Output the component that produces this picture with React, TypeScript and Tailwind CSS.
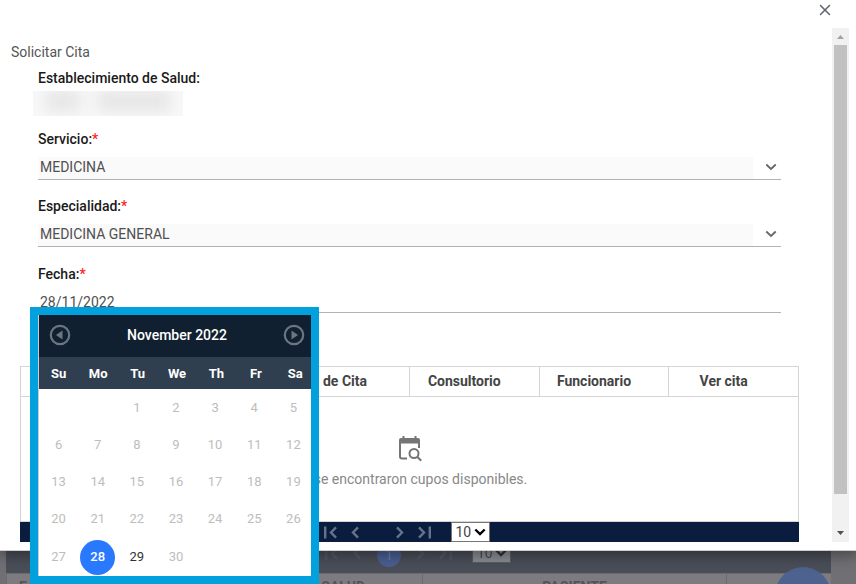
import { X } from "lucide-react";
import type { ReactNode } from "react";

const WEEKDAYS = ["Su", "Mo", "Tu", "We", "Th", "Fr", "Sa"];
const DAYS = Array.from({ length: 30 }, (_, i) => i + 1);
const SELECTED_DAY = 28;
const NEXT_FREE_DAY = 29;

function Chevron({ className, strokeWidth }: { className: string; strokeWidth: number }) {
  return (
    <svg viewBox="0 0 12 12" className={"size-3 " + className} fill="none" stroke="currentColor" strokeWidth={strokeWidth}>
      <path d="M1.300 3.500L6 8l4.700-4.500" />
    </svg>
  );
}

function FieldLabel({ htmlFor, children }: { htmlFor: string; children: ReactNode }) {
  return (
    <label htmlFor={htmlFor} className="block text-sm leading-5 font-medium text-[#1a1a1a]">
      {children}
      <span className="text-[#f22]">*</span>
    </label>
  );
}

function SelectField({ id, label, value }: { id: string; label: string; value: string }) {
  return (
    <div className="flex flex-col gap-2">
      <FieldLabel htmlFor={id}>{label}</FieldLabel>
      <div className="flex border-b border-[#b2b2b2]">
        <select
          id={id}
          className="h-[22px] flex-1 appearance-none bg-[#fafafa] pb-[2px] pl-[2px] text-sm leading-5 text-[#505050] outline-none"
        >
          <option>{value}</option>
        </select>
        <Chevron className="mt-1 mr-1 ml-3 text-[#666]" strokeWidth={1.8} />
      </div>
    </div>
  );
}

function CalendarArrow({ direction }: { direction: "prev" | "next" }) {
  return (
    <button type="button" aria-label={direction} className="text-[#6c7680]">
      <svg viewBox="0 0 22 22" className="size-[22px]" fill="none">
        <circle cx="11" cy="11" r="9.200" stroke="currentColor" strokeWidth="2.200" />
        <path d={direction === "prev" ? "M13.500 6.400v9.200L7 11z" : "M8.500 6.400v9.200L15 11z"} fill="currentColor" />
      </svg>
    </button>
  );
}

function DatePicker() {
  return (
    <div className="absolute top-4 -left-2 z-20 h-[277px] w-[289px] overflow-hidden border-8 border-[#02a1de] bg-white">
      <div className="w-[277px] border-l border-[#ccc]">
        <div className="flex h-[42px] items-center justify-between bg-[#102030] px-[10px] pb-[2px]">
          <CalendarArrow direction="prev" />
          <span className="text-sm font-medium text-white">November 2022</span>
          <CalendarArrow direction="next" />
        </div>
        <div className="grid h-8 grid-cols-7 items-center bg-[#2f3f4f] pt-px text-center text-[13px] font-bold text-white">
          {WEEKDAYS.map((day) => (
            <span key={day}>{day}</span>
          ))}
        </div>
        <div className="grid grid-cols-7 grid-rows-[repeat(4,37px)_40px] place-items-center pr-[2px] text-[13px] text-[#bdbdbd]">
          {DAYS.map((day) => (
            <button
              type="button"
              key={day}
              className={
                (day === 1 ? "col-start-3 " : "") +
                (day === SELECTED_DAY
                  ? "size-[35px] rounded-full bg-[#2979ff] font-medium text-white"
                  : day === NEXT_FREE_DAY
                    ? "text-[#333]"
                    : "")
              }
            >
              {day}
            </button>
          ))}
        </div>
      </div>
    </div>
  );
}

const PAGER_PATHS = {
  first: "M2.200 1.500v12M13 2.300l-5 5.200 5 5.200",
  prev: "M10 2.300l-5 5.200 5 5.200",
  next: "M5 2.300l5 5.200-5 5.200",
  last: "M2 2.300l5 5.200-5 5.200M12.800 1.500v12",
};

function PagerButton({ kind }: { kind: keyof typeof PAGER_PATHS }) {
  return (
    <button type="button" aria-label={kind} className="text-[#66728a]">
      <svg viewBox="0 0 15 15" className="size-[15px]" fill="none" stroke="currentColor" strokeWidth="2.400">
        <path d={PAGER_PATHS[kind]} />
      </svg>
    </button>
  );
}

function PageSize({ label }: { label: string }) {
  return (
    <span className="relative ml-[19px] flex items-center">
      <select
        aria-label={label}
        className="h-5 w-[39px] appearance-none border border-[#767676] bg-white pl-1 text-sm leading-4 text-[#444]"
      >
        <option>10</option>
      </select>
      <Chevron className="pointer-events-none absolute right-1 text-black" strokeWidth={2.4} />
    </span>
  );
}

function CalendarSearchIcon() {
  return (
    <svg viewBox="0 0 24 27" className="h-[27px] w-6" fill="none" stroke="#757575" strokeWidth="2">
      <path d="M9 23.500H4a2 2 0 0 1-2-2V5.500M21 5v8" />
      <path d="M3 3h17a2 2 0 0 1 2 2v3.500H1V5a2 2 0 0 1 2-2zM4.500 1h2v3h-2zM16.500 1h2v3h-2z" fill="#757575" stroke="none" />
      <circle cx="16" cy="18.500" r="4.500" />
      <path d="M19.200 21.700l4 4" />
    </svg>
  );
}

function Scrollbar() {
  return (
    <div className="flex w-[17px] flex-col items-center bg-[#f1f1f1]">
      <svg viewBox="0 0 17 17" className="size-[17px]" fill="#a3a3a3">
        <path d="M5 11h7L8.500 7z" />
      </svg>
      <div className="h-[449px] w-[13px] bg-[#c1c1c1]" />
      <svg viewBox="0 0 17 17" className="mt-auto size-[17px]" fill="#505050">
        <path d="M5 6h7L8.500 10z" />
      </svg>
    </div>
  );
}

function RedactedName() {
  return (
    <div className="mt-[3px] -ml-[5px] flex h-[25px] w-[150px] gap-4 overflow-hidden bg-[#f9f9f9] pr-3 pl-3">
      <span className="h-5 w-9 bg-[#e4e4e4] blur-[8px]" />
      <span className="h-5 flex-1 bg-[#e4e4e4] blur-[8px]" />
    </div>
  );
}

function AppointmentDialog() {
  return (
    <div
      role="dialog"
      aria-labelledby="dialog-title"
      className="relative z-10 border-b border-[#ccc] bg-white pb-2 shadow-[0_2px_14px_2px_rgba(0,0,0,0.4)]"
    >
      <div className="flex h-7 justify-end pr-[22px]">
        <button type="button" aria-label="Cerrar" className="h-5 text-[#5c6670]">
          <X size={18} strokeWidth={2} />
        </button>
      </div>
      <div className="flex pr-[7px]">
        <div className="min-w-0 flex-1 pt-4">
          <h1 id="dialog-title" className="pl-[11px] text-sm leading-4 text-[#555]">
            Solicitar Cita
          </h1>
          <form className="mt-2 pr-[51px] pl-[38px]">
            <p className="text-sm leading-5 font-medium text-[#1a1a1a]">Establecimiento de Salud:</p>
            <RedactedName />
            <div className="mt-[13px] flex flex-col gap-4">
              <SelectField id="servicio" label="Servicio:" value="MEDICINA" />
              <SelectField id="especialidad" label="Especialidad:" value="MEDICINA GENERAL" />
              <div className="pt-px">
                <FieldLabel htmlFor="fecha">Fecha:</FieldLabel>
                <div className="relative mt-[7px]">
                  <input
                    id="fecha"
                    defaultValue="28/11/2022"
                    className="block h-[22px] w-full border-b border-[#b2b2b2] pl-[2px] text-sm text-[#505050] outline-none"
                  />
                  <DatePicker />
                </div>
              </div>
            </div>
          </form>
          <div className="mt-[53px] mr-[33px] ml-5">
            <table className="w-full table-fixed border-collapse text-sm">
              <colgroup>
                <col className="w-[38%]" />
                <col className="w-[12%]" />
                <col />
                <col />
                <col />
              </colgroup>
              <thead>
                <tr className="h-[30px]">
                  <th className="border border-[#d5d5d5]" />
                  <th className="border border-[#d5d5d5] pr-[42px] pb-[2px] text-right font-bold whitespace-nowrap text-[#444]">
                    de Cita
                  </th>
                  {["Consultorio", "Funcionario", "Ver cita"].map((title) => (
                    <th key={title} className="border border-[#d5d5d5] pr-5 pb-[2px] font-bold text-[#444]">
                      {title}
                    </th>
                  ))}
                </tr>
              </thead>
              <tbody>
                <tr>
                  <td colSpan={5} className="h-[125px] border border-[#d5d5d5] pt-[6px] text-[#888]">
                    <div className="flex flex-col items-center gap-[7px]">
                      <CalendarSearchIcon />
                      <p className="pl-[22px] leading-5">se encontraron cupos disponibles.</p>
                    </div>
                  </td>
                </tr>
              </tbody>
            </table>
            <nav aria-label="Cupos" className="flex h-5 items-center justify-center bg-[#0a1d3f] pr-[7px]">
              <div className="flex items-center gap-[10px]">
                <PagerButton kind="first" />
                <PagerButton kind="prev" />
                <span className="w-[9px]" />
                <PagerButton kind="next" />
                <PagerButton kind="last" />
              </div>
              <PageSize label="Cupos por página" />
            </nav>
          </div>
        </div>
        <Scrollbar />
      </div>
    </div>
  );
}

function PageBehind() {
  return (
    <div className="relative flex-1 bg-[#706f73] pr-[25px] pl-[6px]">
      <nav aria-label="Citas" className="-mt-[18px] flex h-10 items-center justify-center bg-[#4a4e58] pr-[2px]">
        <div className="flex items-center gap-[11px] opacity-30">
          <PagerButton kind="first" />
          <PagerButton kind="prev" />
        </div>
        <span className="mx-3 mt-1 flex size-6 items-center justify-center rounded-full bg-[#4a5f91] text-sm text-[#6f7fa0]">
          1
        </span>
        <div className="flex items-center gap-[10px] opacity-30">
          <PagerButton kind="next" />
          <PagerButton kind="last" />
        </div>
        <span className="opacity-35">
          <PageSize label="Citas por página" />
        </span>
      </nav>
      <div className="flex border-t border-l border-[#6c6b70] bg-[#7c7b80] text-sm leading-5 font-bold text-[#55545a]">
        <div className="flex w-[416px] justify-between border-r border-[#6c6b70] pt-[3px] pr-[57px] pl-3">
          <span>E</span>
          <span>SALUD</span>
        </div>
        <div className="w-[304px] border-r border-[#6c6b70] pt-[3px] text-center">PACIENTE</div>
      </div>
      <button
        type="button"
        aria-label="Nueva cita"
        className="absolute top-4 right-[25px] size-14 rounded-full bg-[#4e628f]"
      />
    </div>
  );
}

export default function App() {
  return (
    <div className="flex h-screen flex-col overflow-hidden bg-[#706f73] font-[Roboto,sans-serif]">
      <AppointmentDialog />
      <PageBehind />
    </div>
  );
}
